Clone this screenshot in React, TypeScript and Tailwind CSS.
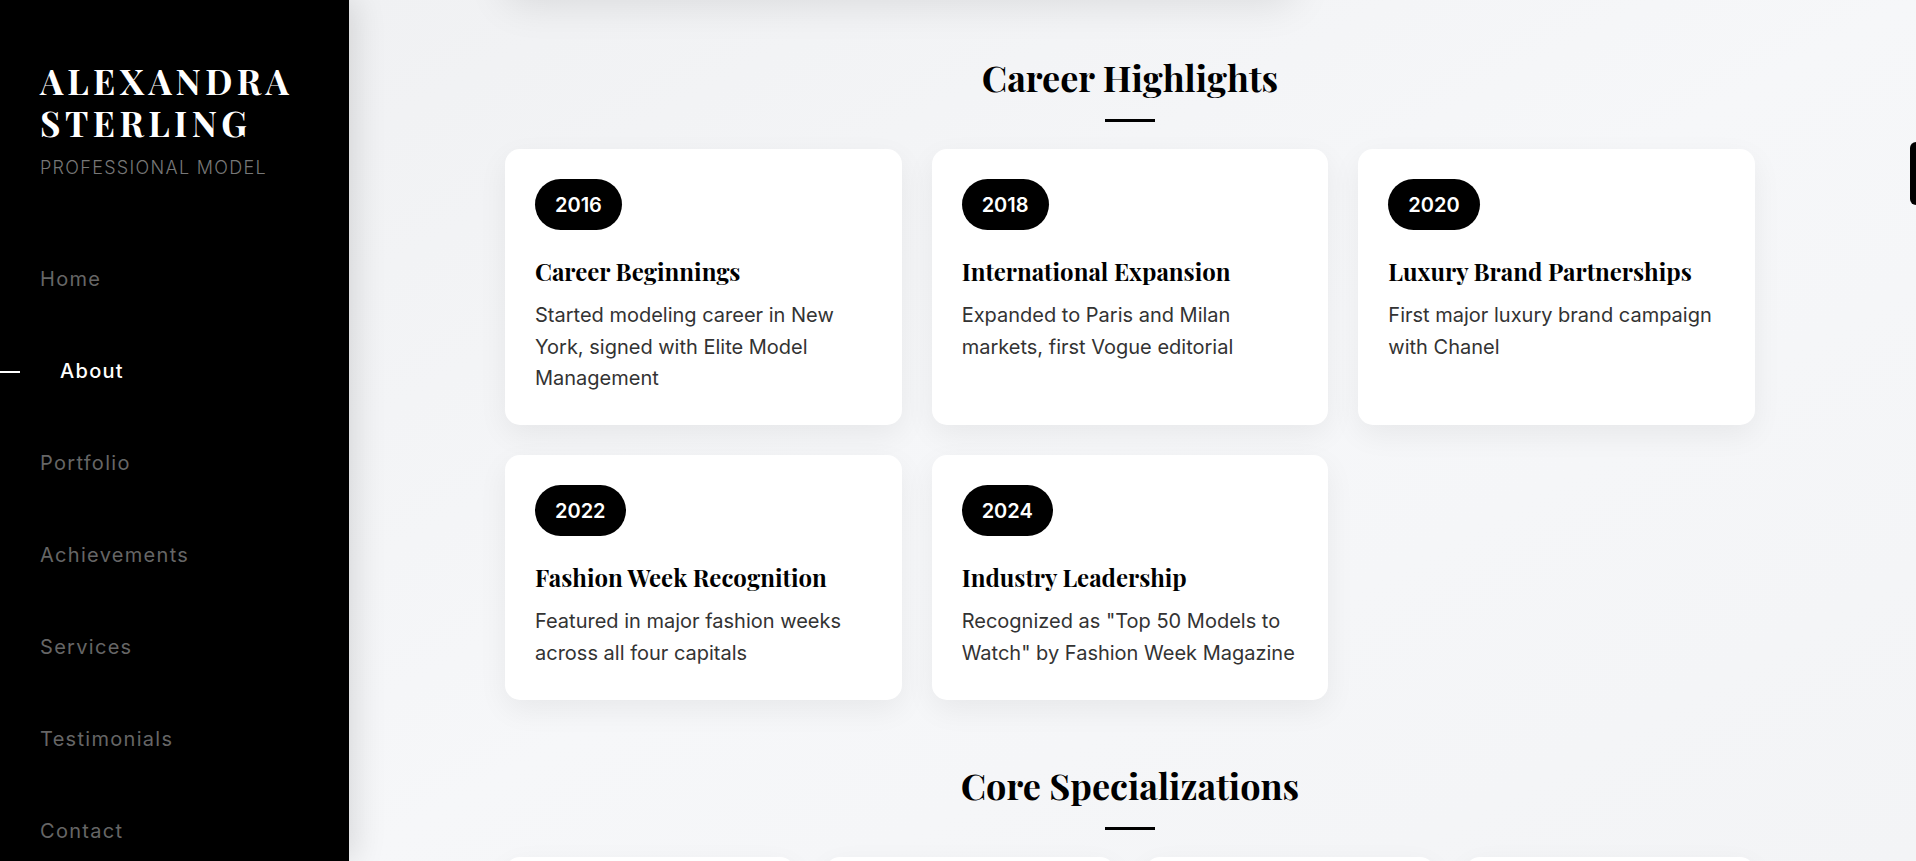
import React from "react";

const navItems = ["Home", "About", "Portfolio", "Achievements", "Services", "Testimonials", "Contact"];

const highlights = [
    { year: "2016", title: "Career Beginnings", text: "Started modeling career in New York, signed with Elite Model Management" },
    { year: "2018", title: "International Expansion", text: "Expanded to Paris and Milan markets, first Vogue editorial" },
    { year: "2020", title: "Luxury Brand Partnerships", text: "First major luxury brand campaign with Chanel" },
    { year: "2022", title: "Fashion Week Recognition", text: "Featured in major fashion weeks across all four capitals" },
    { year: "2024", title: "Industry Leadership", text: "Recognized as \"Top 50 Models to Watch\" by Fashion Week Magazine" },
];

function Sidebar() {
    return (
        <aside className="relative z-10 w-[349px] shrink-0 h-full bg-black overflow-hidden shadow-[6px_0_30px_rgba(0,0,0,0.12)]">
            {/* BRAND */}
            <div className="pl-10 pt-[60px]">
                <h1 className="font-['Playfair_Display','Liberation_Serif',serif] font-bold text-white text-[35px] leading-[42px] tracking-[4.5px]">
                    ALEXANDRA
                    <br />
                    STERLING
                </h1>
                <p className="mt-3 font-['Inter',sans-serif] font-light text-[18px] leading-6 tracking-[1.3px] text-[#777]">
                    PROFESSIONAL MODEL
                </p>
            </div>

            {/* NAV */}
            <nav className="mt-[53px] font-['Inter',sans-serif]">
                {navItems.map((item) => {
                    const active = item === "About";
                    return (
                        <div key={item} className="relative h-[92px] flex items-center">
                            {active && <span className="absolute left-0 top-1/2 w-5 h-[2px] bg-white" />}
                            <span
                                className={
                                    active
                                        ? "pl-[60px] text-[20px] tracking-[1.3px] text-white font-medium"
                                        : "pl-10 text-[20px] tracking-[1.3px] text-[#666]"
                                }
                            >
                                {item}
                            </span>
                        </div>
                    );
                })}
            </nav>
        </aside>
    );
}

function SectionTitle({ children }: { children: React.ReactNode }) {
    return (
        <div className="flex flex-col items-center">
            <h2 className="font-['Playfair_Display','Liberation_Serif',serif] font-bold text-black text-[36px] leading-[48px]">
                {children}
            </h2>
            <span className="mt-[18px] w-[50px] h-[3px] bg-black" />
        </div>
    );
}

function HighlightCard({ item }: any) {
    return (
        <div className="bg-white rounded-[15px] shadow-[0_10px_30px_rgba(0,0,0,0.06)] px-[30px] pt-[30px] pb-[30px]">
            <span className="inline-flex items-center h-[51px] px-5 rounded-full bg-black text-white text-[20px] font-semibold">
                {item.year}
            </span>
            <h3 className="mt-[25px] font-['Playfair_Display','Liberation_Serif',serif] font-bold text-black text-[24px] leading-8">
                {item.title}
            </h3>
            <p className="mt-[13px] text-[20px] leading-[31.7px] text-[#333]">
                {item.text}
            </p>
        </div>
    );
}

export default function App() {
    return (
        <div className="h-[861px] w-full flex overflow-hidden font-['Inter',sans-serif]">
            <Sidebar />

            <main className="relative flex-1 h-full overflow-hidden bg-gradient-to-br from-[#f0f1f3] via-[#f6f7f9] to-[#f3f4f6]">
                <div className="w-[1250px] mx-auto pr-[5px] box-content">
                    {/* previous section card, scrolled out of view */}
                    <div className="-mt-[210px] w-[790px] h-[200px] bg-white rounded-[15px] shadow-[0_14px_40px_rgba(0,0,0,0.1)]" />

                    {/* CAREER HIGHLIGHTS */}
                    <section className="pt-[63px]">
                        <SectionTitle>Career Highlights</SectionTitle>
                        <div className="mt-[27px] grid grid-cols-3 gap-[30px]">
                            {highlights.map((h) => (
                                <HighlightCard key={h.year} item={h} />
                            ))}
                        </div>
                    </section>

                    {/* CORE SPECIALIZATIONS */}
                    <section className="pt-[61px]">
                        <SectionTitle>Core Specializations</SectionTitle>
                        <div className="mt-[27px] grid grid-cols-4 gap-[30px]">
                            {[1, 2, 3, 4].map((i) => (
                                <div key={i} className="h-[200px] bg-white rounded-[15px] shadow-[0_10px_30px_rgba(0,0,0,0.06)]" />
                            ))}
                        </div>
                    </section>
                </div>

                {/* floating button at right edge */}
                <div className="absolute right-0 top-[142px] w-[6px] h-[63px] bg-black rounded-l-[6px]" />
            </main>
        </div>
    );
}
